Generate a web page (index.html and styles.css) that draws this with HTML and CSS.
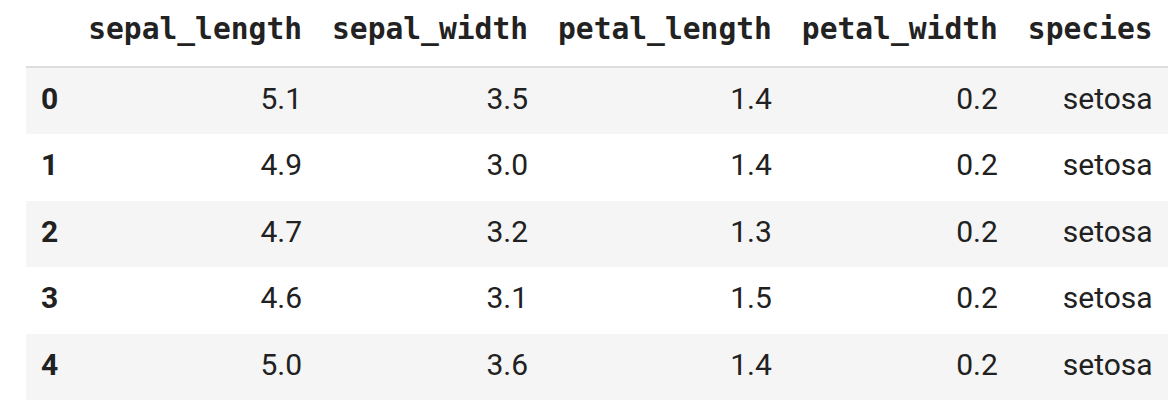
FILE: index.html
```html
<!DOCTYPE html>
<html>
<head>
<meta charset="utf-8">
<link rel="stylesheet" href="styles.css">
</head>
<body>
<div class="wrap">
<table class="df">
  <thead>
    <tr>
      <th class="idx-head"></th>
      <th>sepal_length</th>
      <th>sepal_width</th>
      <th>petal_length</th>
      <th>petal_width</th>
      <th>species</th>
    </tr>
  </thead>
  <tbody>
    <tr class="odd"><th class="idx">0</th><td>5.1</td><td>3.5</td><td>1.4</td><td>0.2</td><td>setosa</td></tr>
    <tr><th class="idx">1</th><td>4.9</td><td>3.0</td><td>1.4</td><td>0.2</td><td>setosa</td></tr>
    <tr class="odd"><th class="idx">2</th><td>4.7</td><td>3.2</td><td>1.3</td><td>0.2</td><td>setosa</td></tr>
    <tr><th class="idx">3</th><td>4.6</td><td>3.1</td><td>1.5</td><td>0.2</td><td>setosa</td></tr>
    <tr class="odd"><th class="idx">4</th><td>5.0</td><td>3.6</td><td>1.4</td><td>0.2</td><td>setosa</td></tr>
  </tbody>
</table>
</div>
</body>
</html>
```

FILE: styles.css
```css
html, body {
  margin: 0;
  padding: 0;
  background: #ffffff;
}

.wrap {
  padding-left: 26px;
}

.df {
  border-collapse: collapse;
  border-spacing: 0;
  color: #212121;
}

.df thead th {
  font-family: "DejaVu Sans Mono", monospace;
  font-weight: bold;
  font-size: 29.6px;
  line-height: 35px;
  text-align: right;
  padding: 12px 15px 19px 15px;
  border-bottom: 2px solid #dddddd;
  white-space: nowrap;
  color: #222222;
}

.df tbody tr {
  height: 66.4px;
}

.df tbody tr.odd {
  background: #f5f5f5;
}

.df tbody td,
.df tbody th {
  font-family: Roboto, "Noto Sans", sans-serif;
  font-size: 30px;
  line-height: 35px;
  padding: 13px 15px 18.4px 15px;
  text-align: right;
  vertical-align: top;
  white-space: nowrap;
}

.df tbody td {
  font-weight: normal;
}

.df tbody th.idx {
  text-align: left;
  font-weight: bold;
}
```
